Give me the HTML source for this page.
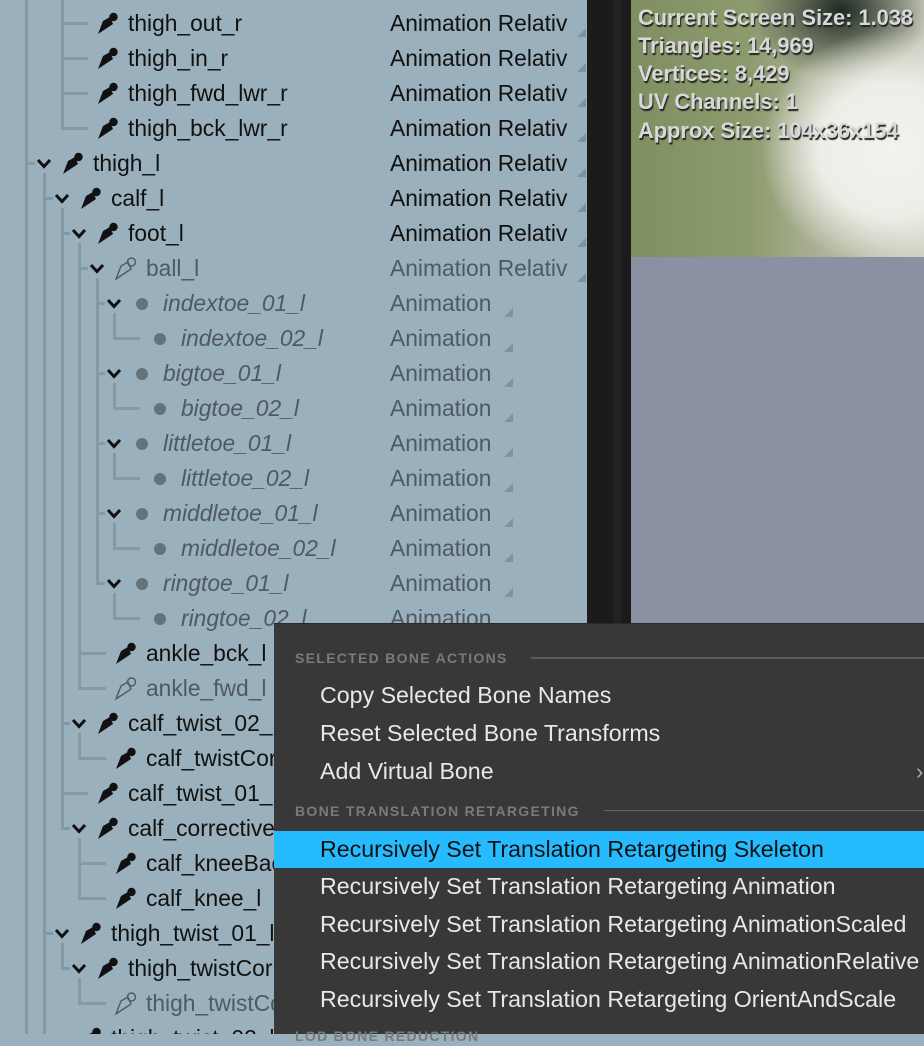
<!DOCTYPE html>
<html><head><meta charset="utf-8"><style>
*{margin:0;padding:0;box-sizing:border-box}
body{width:924px;height:1034px;overflow:hidden;position:relative;background:#9ab0bc;font-family:"Liberation Sans",sans-serif}
#tree{position:absolute;left:0;top:0;width:587px;height:1034px;background:#9ab0bc;overflow:hidden}
.r{position:absolute;left:0;width:587px;height:35px}
.t{position:absolute;top:0;line-height:35px;font-size:22.8px;color:#111;white-space:nowrap}
.g{color:#4f5a60}
.i{font-style:italic;color:#4f5a60}
.a{position:absolute;left:390px;top:0;line-height:35px;font-size:22.8px;color:#111;white-space:nowrap;width:182px;overflow:hidden}
.ag{color:#4f5a60}
.tri{position:absolute;width:0;height:0;border-left:9px solid transparent;border-bottom:9px solid #7e939e;top:22px}
.ch{position:absolute;top:12px;width:16px;height:11px}
.ic{position:absolute;top:5px;width:22px;height:24px}
.dot{position:absolute;top:12px;width:12px;height:12px;border-radius:50%;background:#64727a}
.v{position:absolute;width:3px;background:#8399a5}
.h{position:absolute;height:3px;background:#8399a5}
#strip{position:absolute;left:587px;top:0;width:44px;height:1034px;background:#1b1b1b}
#vp{position:absolute;left:631px;top:0;width:293px;height:1034px;background:#8b91a3}
#vpt{position:absolute;left:0;top:0;width:293px;height:257px;background:
radial-gradient(ellipse 130px 120px at 260px 150px,#f2f2ee 0%,#eeeee8 55%,rgba(230,230,225,0) 100%),
radial-gradient(ellipse 90px 70px at 210px 10px,#1e2a22 0%,rgba(30,40,34,0) 100%),
linear-gradient(90deg,#7f8f62 0%,#8c9b6d 40%,#a6ad8e 60%,#c8cbbc 100%)}
.st{position:absolute;left:7px;font-size:21.8px;font-weight:bold;color:#d8d8d8;text-shadow:1px 2px 1px #222;white-space:nowrap;line-height:26px}
#menu{position:absolute;left:274px;top:623px;width:650px;height:411px;background:#383838;border-top:1px solid #2a2a2a}
.hd{position:absolute;left:21px;font-size:14px;font-weight:bold;letter-spacing:1.3px;color:#7a7a7a;line-height:20px}
.hl{position:absolute;height:2px;background:#5c5c5c;right:0}
.mi{position:absolute;left:46px;font-size:23.2px;color:#e8e8e8;line-height:36px;white-space:nowrap}
#sel{position:absolute;left:0;top:207px;width:650px;height:37px;background:#26bbff}
</style></head><body>
<svg width="0" height="0" style="position:absolute"><defs>
<symbol id="bone" viewBox="0 0 22 24"><path d="M1 23 L6 10 L13 6 L16 13 Z" fill="#111"/><circle cx="16.5" cy="6" r="4.2" fill="#111"/></symbol>
<symbol id="boneo" viewBox="0 0 22 24"><path d="M1 23 L6 10 L13 6 L16 13 Z" fill="none" stroke="#4f5a60" stroke-width="1.4"/><circle cx="16.5" cy="6" r="4" fill="none" stroke="#4f5a60" stroke-width="1.4"/></symbol>
<symbol id="chev" viewBox="0 0 16 11"><polyline points="2,2 8,8.5 14,2" fill="none" stroke="#111" stroke-width="3"/></symbol>
</defs></svg>
<div id="tree">
<div class="v" style="left:25px;top:0;height:1034px"></div>
<div class="v" style="left:61px;top:0;height:130px"></div>
<div class="h" style="left:61px;top:22px;width:27px"></div>
<div class="h" style="left:61px;top:57px;width:27px"></div>
<div class="h" style="left:61px;top:92px;width:27px"></div>
<div class="h" style="left:61px;top:127px;width:27px"></div>
<div class="h" style="left:25px;top:162px;width:10px"></div>
<div class="v" style="left:43px;top:173px;height:861px"></div>
<div class="h" style="left:43px;top:197px;width:10px"></div>
<div class="h" style="left:43px;top:932px;width:10px"></div>
<div class="v" style="left:61px;top:208px;height:622px"></div>
<div class="h" style="left:61px;top:232px;width:9px"></div>
<div class="h" style="left:61px;top:722px;width:9px"></div>
<div class="h" style="left:61px;top:792px;width:27px"></div>
<div class="h" style="left:61px;top:827px;width:9px"></div>
<div class="v" style="left:78px;top:243px;height:447px"></div>
<div class="h" style="left:78px;top:267px;width:10px"></div>
<div class="h" style="left:78px;top:652px;width:28px"></div>
<div class="h" style="left:78px;top:687px;width:28px"></div>
<div class="v" style="left:96px;top:278px;height:307px"></div>
<div class="h" style="left:96px;top:302px;width:9px"></div>
<div class="h" style="left:96px;top:372px;width:9px"></div>
<div class="h" style="left:96px;top:442px;width:9px"></div>
<div class="h" style="left:96px;top:512px;width:9px"></div>
<div class="h" style="left:96px;top:582px;width:9px"></div>
<div class="v" style="left:113px;top:313px;height:25px"></div><div class="h" style="left:113px;top:337px;width:27px"></div>
<div class="v" style="left:113px;top:383px;height:25px"></div><div class="h" style="left:113px;top:407px;width:27px"></div>
<div class="v" style="left:113px;top:453px;height:25px"></div><div class="h" style="left:113px;top:477px;width:27px"></div>
<div class="v" style="left:113px;top:523px;height:25px"></div><div class="h" style="left:113px;top:547px;width:27px"></div>
<div class="v" style="left:113px;top:593px;height:25px"></div><div class="h" style="left:113px;top:617px;width:27px"></div>
<div class="v" style="left:78px;top:733px;height:25px"></div><div class="h" style="left:78px;top:757px;width:28px"></div>
<div class="v" style="left:78px;top:838px;height:60px"></div><div class="h" style="left:78px;top:862px;width:28px"></div><div class="h" style="left:78px;top:897px;width:28px"></div>
<div class="v" style="left:61px;top:943px;height:25px"></div><div class="h" style="left:61px;top:967px;width:9px"></div>
<div class="v" style="left:78px;top:978px;height:25px"></div><div class="h" style="left:78px;top:1002px;width:28px"></div>

<div class="r" style="top:6px"><svg class="ic" style="left:97px"><use href="#bone"/></svg><div class="t" style="left:128px">thigh_out_r</div><div class="a">Animation Relativ</div><div class="tri" style="left:577px"></div></div>
<div class="r" style="top:41px"><svg class="ic" style="left:97px"><use href="#bone"/></svg><div class="t" style="left:128px">thigh_in_r</div><div class="a">Animation Relativ</div><div class="tri" style="left:577px"></div></div>
<div class="r" style="top:76px"><svg class="ic" style="left:97px"><use href="#bone"/></svg><div class="t" style="left:128px">thigh_fwd_lwr_r</div><div class="a">Animation Relativ</div><div class="tri" style="left:577px"></div></div>
<div class="r" style="top:111px"><svg class="ic" style="left:97px"><use href="#bone"/></svg><div class="t" style="left:128px">thigh_bck_lwr_r</div><div class="a">Animation Relativ</div><div class="tri" style="left:577px"></div></div>
<div class="r" style="top:146px"><svg class="ch" style="left:36px"><use href="#chev"/></svg><svg class="ic" style="left:62px"><use href="#bone"/></svg><div class="t" style="left:93px">thigh_l</div><div class="a">Animation Relativ</div><div class="tri" style="left:577px"></div></div>
<div class="r" style="top:181px"><svg class="ch" style="left:54px"><use href="#chev"/></svg><svg class="ic" style="left:80px"><use href="#bone"/></svg><div class="t" style="left:111px">calf_l</div><div class="a">Animation Relativ</div><div class="tri" style="left:577px"></div></div>
<div class="r" style="top:216px"><svg class="ch" style="left:71px"><use href="#chev"/></svg><svg class="ic" style="left:97px"><use href="#bone"/></svg><div class="t" style="left:128px">foot_l</div><div class="a">Animation Relativ</div><div class="tri" style="left:577px"></div></div>
<div class="r" style="top:251px"><svg class="ch" style="left:89px"><use href="#chev"/></svg><svg class="ic" style="left:115px"><use href="#boneo"/></svg><div class="t g" style="left:146px">ball_l</div><div class="a ag">Animation Relativ</div><div class="tri" style="left:577px"></div></div>
<div class="r" style="top:286px"><svg class="ch" style="left:106px"><use href="#chev"/></svg><div class="dot" style="left:136px"></div><div class="t i" style="left:163px">indextoe_01_l</div><div class="a ag">Animation</div><div class="tri" style="left:504px"></div></div>
<div class="r" style="top:321px"><div class="dot" style="left:154px"></div><div class="t i" style="left:181px">indextoe_02_l</div><div class="a ag">Animation</div><div class="tri" style="left:504px"></div></div>
<div class="r" style="top:356px"><svg class="ch" style="left:106px"><use href="#chev"/></svg><div class="dot" style="left:136px"></div><div class="t i" style="left:163px">bigtoe_01_l</div><div class="a ag">Animation</div><div class="tri" style="left:504px"></div></div>
<div class="r" style="top:391px"><div class="dot" style="left:154px"></div><div class="t i" style="left:181px">bigtoe_02_l</div><div class="a ag">Animation</div><div class="tri" style="left:504px"></div></div>
<div class="r" style="top:426px"><svg class="ch" style="left:106px"><use href="#chev"/></svg><div class="dot" style="left:136px"></div><div class="t i" style="left:163px">littletoe_01_l</div><div class="a ag">Animation</div><div class="tri" style="left:504px"></div></div>
<div class="r" style="top:461px"><div class="dot" style="left:154px"></div><div class="t i" style="left:181px">littletoe_02_l</div><div class="a ag">Animation</div><div class="tri" style="left:504px"></div></div>
<div class="r" style="top:496px"><svg class="ch" style="left:106px"><use href="#chev"/></svg><div class="dot" style="left:136px"></div><div class="t i" style="left:163px">middletoe_01_l</div><div class="a ag">Animation</div><div class="tri" style="left:504px"></div></div>
<div class="r" style="top:531px"><div class="dot" style="left:154px"></div><div class="t i" style="left:181px">middletoe_02_l</div><div class="a ag">Animation</div><div class="tri" style="left:504px"></div></div>
<div class="r" style="top:566px"><svg class="ch" style="left:106px"><use href="#chev"/></svg><div class="dot" style="left:136px"></div><div class="t i" style="left:163px">ringtoe_01_l</div><div class="a ag">Animation</div><div class="tri" style="left:504px"></div></div>
<div class="r" style="top:601px"><div class="dot" style="left:154px"></div><div class="t i" style="left:181px">ringtoe_02_l</div><div class="a ag">Animation</div></div>
<div class="r" style="top:636px"><svg class="ic" style="left:115px"><use href="#bone"/></svg><div class="t" style="left:146px">ankle_bck_l</div></div>
<div class="r" style="top:671px"><svg class="ic" style="left:115px"><use href="#boneo"/></svg><div class="t g" style="left:146px">ankle_fwd_l</div></div>
<div class="r" style="top:706px"><svg class="ch" style="left:71px"><use href="#chev"/></svg><svg class="ic" style="left:97px"><use href="#bone"/></svg><div class="t" style="left:128px">calf_twist_02_l</div></div>
<div class="r" style="top:741px"><svg class="ic" style="left:115px"><use href="#bone"/></svg><div class="t" style="left:146px">calf_twistCor</div></div>
<div class="r" style="top:776px"><svg class="ic" style="left:97px"><use href="#bone"/></svg><div class="t" style="left:128px">calf_twist_01_l</div></div>
<div class="r" style="top:811px"><svg class="ch" style="left:71px"><use href="#chev"/></svg><svg class="ic" style="left:97px"><use href="#bone"/></svg><div class="t" style="left:128px">calf_corrective</div></div>
<div class="r" style="top:846px"><svg class="ic" style="left:115px"><use href="#bone"/></svg><div class="t" style="left:146px">calf_kneeBack</div></div>
<div class="r" style="top:881px"><svg class="ic" style="left:115px"><use href="#bone"/></svg><div class="t" style="left:146px">calf_knee_l</div></div>
<div class="r" style="top:916px"><svg class="ch" style="left:54px"><use href="#chev"/></svg><svg class="ic" style="left:80px"><use href="#bone"/></svg><div class="t" style="left:111px">thigh_twist_01_l</div></div>
<div class="r" style="top:951px"><svg class="ch" style="left:71px"><use href="#chev"/></svg><svg class="ic" style="left:97px"><use href="#bone"/></svg><div class="t" style="left:128px">thigh_twistCor</div></div>
<div class="r" style="top:986px"><svg class="ic" style="left:115px"><use href="#boneo"/></svg><div class="t g" style="left:146px">thigh_twistCor</div></div>
<div class="r" style="top:1021px"><svg class="ic" style="left:80px"><use href="#bone"/></svg><div class="t" style="left:111px">thigh_twist_02_l</div></div>
</div>
<div id="strip"><div style="position:absolute;left:26px;top:0;width:8px;height:1034px;background:#222"></div></div>
<div id="vp"><div id="vpt"></div>
<div class="st" style="top:5px">Current Screen Size: 1.038</div>
<div class="st" style="top:33px">Triangles: 14,969</div>
<div class="st" style="top:61px">Vertices: 8,429</div>
<div class="st" style="top:89px">UV Channels: 1</div>
<div class="st" style="top:118px">Approx Size: 104x36x154</div>
</div>
<div id="menu">
<div class="hd" style="top:24px">SELECTED BONE ACTIONS</div><div class="hl" style="left:257px;top:33px"></div>
<div class="mi" style="top:53px">Copy Selected Bone Names</div>
<div class="mi" style="top:91px">Reset Selected Bone Transforms</div>
<div class="mi" style="top:129px">Add Virtual Bone</div>
<div style="position:absolute;left:642px;top:135px;color:#aaa;font-size:22px">›</div>
<div class="hd" style="top:177px">BONE TRANSLATION RETARGETING</div><div class="hl" style="left:330px;top:186px;height:1px;background:#666"></div>
<div id="sel"></div>
<div class="mi" style="top:207px;color:#111">Recursively Set Translation Retargeting Skeleton</div>
<div class="mi" style="top:244px">Recursively Set Translation Retargeting Animation</div>
<div class="mi" style="top:282px">Recursively Set Translation Retargeting AnimationScaled</div>
<div class="mi" style="top:319px">Recursively Set Translation Retargeting AnimationRelative</div>
<div class="mi" style="top:357px">Recursively Set Translation Retargeting OrientAndScale</div>
<div class="hd" style="top:402px">LOD BONE REDUCTION</div>
</div>
</body></html>
